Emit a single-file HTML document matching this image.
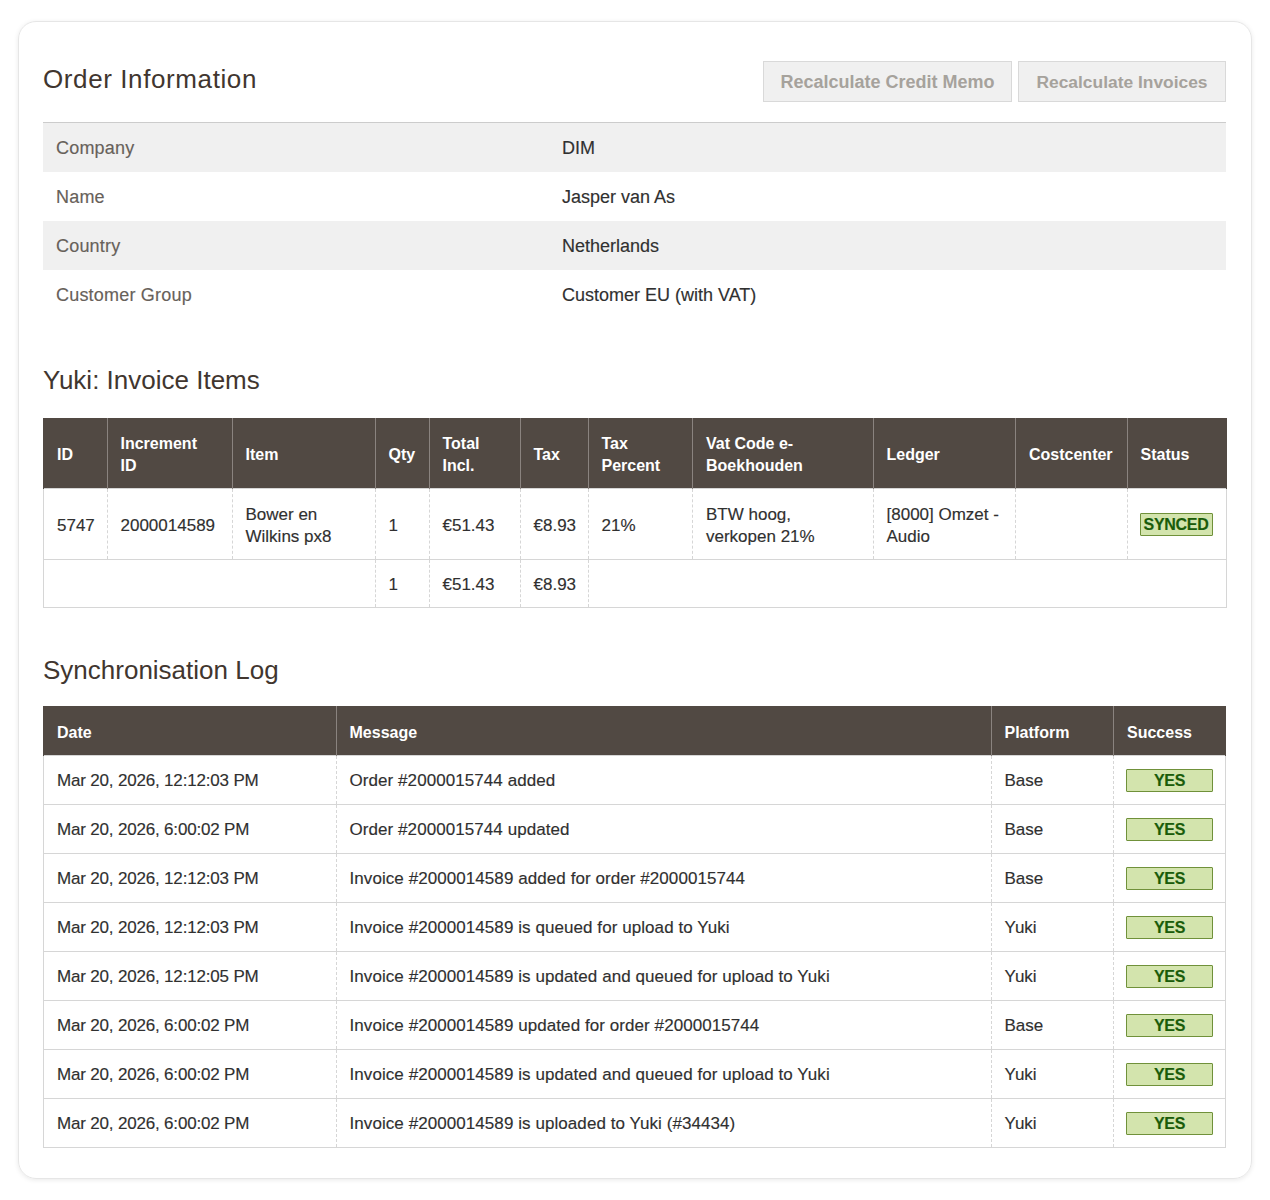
<!DOCTYPE html>
<html><head><meta charset="utf-8">
<style>
*{box-sizing:border-box;margin:0;padding:0}
html,body{width:1270px;height:1200px;background:#fff;overflow:hidden}
body{position:relative;font-family:"Liberation Sans",sans-serif;color:#303030}
.card{position:absolute;left:18px;top:21px;width:1234px;height:1158px;border-radius:18px;border:1px solid #e6e6e6;box-shadow:0 1px 5px rgba(0,0,0,.09)}
.ttl{position:absolute;left:43px;font-size:26px;line-height:26px;color:#41362f;white-space:nowrap}
.btn{position:absolute;top:61px;height:41px;background:#f0f0f0;border:1px solid #d9d9d9;color:#a6a29c;font-weight:bold;font-size:18px;line-height:39px;padding-top:1px;text-align:center;white-space:nowrap}
table{position:absolute;left:43px;width:1183px;border-collapse:collapse;table-layout:fixed}
.info td{height:49px;padding:2px 13px 0;font-size:18px;vertical-align:middle}
.info tr:nth-child(odd) td{background:#f0f0f0}
.info td.l{color:#67615a}
.grid th{background:#514943;color:#fff;font-weight:bold;font-size:16px;line-height:22px;text-align:left;padding:4px 13px 0;border-left:1px solid #8a837f;border-right:1px solid #8a837f;vertical-align:middle}
.grid th:first-child{border-left:1px solid #514943}
.grid th:last-child{border-right:1px solid #514943}
.grid td{font-size:17px;line-height:22.5px;padding:4px 13px 0;border:1px dashed #d6d6d6;border-top:1px solid #d6d6d6;border-bottom:1px solid #d6d6d6;vertical-align:middle}
.grid td:first-child{border-left:1px solid #d6d6d6}
.grid td:last-child{border-right:1px solid #d6d6d6}
.inv td{padding-top:5px}
.sync th{padding-top:5px}
.sync td:first-child{letter-spacing:-.18px}
.sync td:nth-child(2){letter-spacing:.07px}
.info td.l{letter-spacing:.2px}
td{-webkit-text-stroke:.15px currentColor}
.badge{display:inline-block;position:relative;top:-1.5px;left:-1px;background:#d3e4ad;border:1px solid #70913a;color:#1a5c0a;font-weight:bold;font-size:16px;letter-spacing:-.3px;line-height:21px;height:23px;text-align:center;border-radius:1px;vertical-align:middle}
</style></head><body>
<div class="card"></div>
<div class="ttl" style="top:66px;letter-spacing:.6px">Order Information</div>
<div class="btn" style="left:763px;width:249px">Recalculate Credit Memo</div>
<div class="btn" style="left:1018px;width:208px;font-size:17.4px">Recalculate Invoices</div>

<table class="info" style="top:122px;border-top:1px solid #cccccc">
<colgroup><col style="width:506px"><col></colgroup>
<tr><td class="l">Company</td><td>DIM</td></tr>
<tr><td class="l">Name</td><td>Jasper van As</td></tr>
<tr><td class="l">Country</td><td>Netherlands</td></tr>
<tr><td class="l">Customer Group</td><td>Customer EU (with VAT)</td></tr>
</table>

<div class="ttl" style="top:367px">Yuki: Invoice Items</div>

<table class="grid inv" style="top:418px">
<colgroup><col style="width:63.5px"><col style="width:125px"><col style="width:143px"><col style="width:54px"><col style="width:91px"><col style="width:68px"><col style="width:104.5px"><col style="width:180.5px"><col style="width:142.5px"><col style="width:111.5px"><col style="width:99.5px"></colgroup>
<tr style="height:70px"><th>ID</th><th>Increment<br>ID</th><th>Item</th><th>Qty</th><th>Total Incl.</th><th>Tax</th><th>Tax Percent</th><th>Vat Code e-Boekhouden</th><th>Ledger</th><th>Costcenter</th><th>Status</th></tr>
<tr style="height:71px"><td>5747</td><td>2000014589</td><td>Bower en Wilkins px8</td><td>1</td><td>€51.43</td><td>€8.93</td><td>21%</td><td>BTW hoog, verkopen 21%</td><td>[8000] Omzet - Audio</td><td></td><td><span class="badge" style="width:73px">SYNCED</span></td></tr>
<tr style="height:48px"><td colspan="3"></td><td>1</td><td>€51.43</td><td>€8.93</td><td colspan="5" style="border-left:1px dashed #d6d6d6"></td></tr>
</table>

<div class="ttl" style="top:657px">Synchronisation Log</div>

<table class="grid sync" style="top:706px">
<colgroup><col style="width:292.5px"><col style="width:655px"><col style="width:122.5px"><col></colgroup>
<tr style="height:49px"><th>Date</th><th>Message</th><th>Platform</th><th>Success</th></tr>
<tr style="height:49px"><td>Mar 20, 2026, 12:12:03 PM</td><td>Order #2000015744 added</td><td>Base</td><td><span class="badge" style="width:87px">YES</span></td></tr>
<tr style="height:49px"><td>Mar 20, 2026, 6:00:02 PM</td><td>Order #2000015744 updated</td><td>Base</td><td><span class="badge" style="width:87px">YES</span></td></tr>
<tr style="height:49px"><td>Mar 20, 2026, 12:12:03 PM</td><td>Invoice #2000014589 added for order #2000015744</td><td>Base</td><td><span class="badge" style="width:87px">YES</span></td></tr>
<tr style="height:49px"><td>Mar 20, 2026, 12:12:03 PM</td><td>Invoice #2000014589 is queued for upload to Yuki</td><td>Yuki</td><td><span class="badge" style="width:87px">YES</span></td></tr>
<tr style="height:49px"><td>Mar 20, 2026, 12:12:05 PM</td><td>Invoice #2000014589 is updated and queued for upload to Yuki</td><td>Yuki</td><td><span class="badge" style="width:87px">YES</span></td></tr>
<tr style="height:49px"><td>Mar 20, 2026, 6:00:02 PM</td><td>Invoice #2000014589 updated for order #2000015744</td><td>Base</td><td><span class="badge" style="width:87px">YES</span></td></tr>
<tr style="height:49px"><td>Mar 20, 2026, 6:00:02 PM</td><td>Invoice #2000014589 is updated and queued for upload to Yuki</td><td>Yuki</td><td><span class="badge" style="width:87px">YES</span></td></tr>
<tr style="height:49px"><td>Mar 20, 2026, 6:00:02 PM</td><td>Invoice #2000014589 is uploaded to Yuki (#34434)</td><td>Yuki</td><td><span class="badge" style="width:87px">YES</span></td></tr>
</table>
</body></html>
